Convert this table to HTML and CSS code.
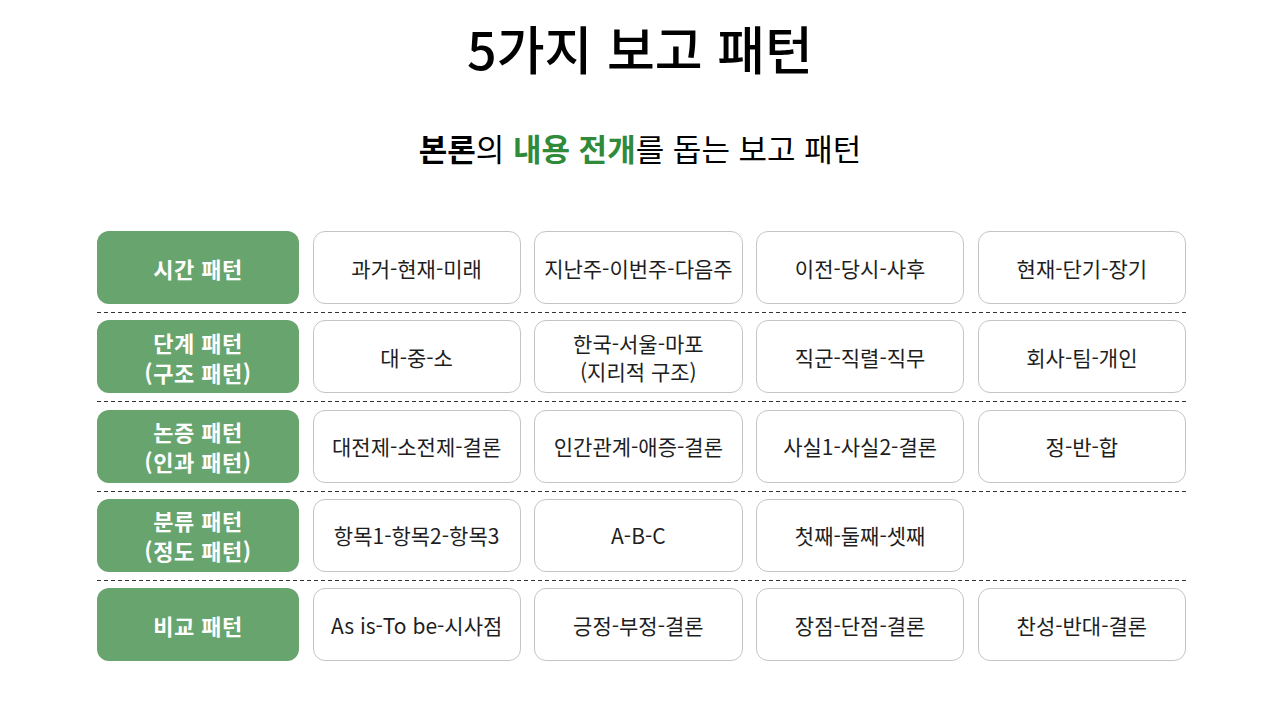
FILE: index.html
```html
<!DOCTYPE html>
<html lang="ko">
<head>
<meta charset="utf-8">
<title>5가지 보고 패턴</title>
<link rel="stylesheet" href="styles.css">
</head>
<body>
<div class="page">
  <h1 class="title">5가지 보고 패턴</h1>
  <p class="subtitle"><b>본론</b>의 <b class="accent">내용 전개</b>를 돕는 보고 패턴</p>
  <div class="table">
    <div class="row">
      <div class="label">시간 패턴</div>
      <div class="cell">과거-현재-미래</div>
      <div class="cell">지난주-이번주-다음주</div>
      <div class="cell">이전-당시-사후</div>
      <div class="cell">현재-단기-장기</div>
    </div>
    <div class="sep"></div>
    <div class="row">
      <div class="label">단계 패턴<br>(구조 패턴)</div>
      <div class="cell">대-중-소</div>
      <div class="cell">한국-서울-마포<br>(지리적 구조)</div>
      <div class="cell">직군-직렬-직무</div>
      <div class="cell">회사-팀-개인</div>
    </div>
    <div class="sep"></div>
    <div class="row">
      <div class="label">논증 패턴<br>(인과 패턴)</div>
      <div class="cell">대전제-소전제-결론</div>
      <div class="cell">인간관계-애증-결론</div>
      <div class="cell">사실1-사실2-결론</div>
      <div class="cell">정-반-합</div>
    </div>
    <div class="sep"></div>
    <div class="row">
      <div class="label">분류 패턴<br>(정도 패턴)</div>
      <div class="cell">항목1-항목2-항목3</div>
      <div class="cell">A-B-C</div>
      <div class="cell">첫째-둘째-셋째</div>
      <div class="cell empty"></div>
    </div>
    <div class="sep"></div>
    <div class="row">
      <div class="label">비교 패턴</div>
      <div class="cell">As is-To be-시사점</div>
      <div class="cell">긍정-부정-결론</div>
      <div class="cell">장점-단점-결론</div>
      <div class="cell">찬성-반대-결론</div>
    </div>
  </div>
</div>
</body>
</html>
```
FILE: styles.css
```css
* { box-sizing: border-box; }
html, body {
  margin: 0;
  padding: 0;
  background: #ffffff;
}
body {
  font-family: "Noto Sans CJK KR", "Noto Sans", sans-serif;
  color: #1a1a1a;
}
.page {
  width: 1280px;
  height: 720px;
  padding-top: 18px;
}
.title {
  margin: 0;
  height: 60px;
  line-height: 60px;
  font-size: 52px;
  font-weight: 500;
  text-align: center;
  color: #000;
}
.subtitle {
  margin: 50px 0 0;
  height: 40px;
  line-height: 40px;
  font-size: 31px;
  font-weight: 400;
  text-align: center;
  color: #000;
}
.subtitle b { font-weight: 700; }
.subtitle .accent { color: #2f8a3a; }
.table {
  width: 1089px;
  margin: 63px 0 0 97px;
}
.row {
  display: grid;
  grid-template-columns: 202px repeat(4, 1fr);
  column-gap: 13.5px;
  height: 73px;
}
.label {
  background: #68a46e;
  color: #fff;
  border-radius: 12px;
  font-size: 22px;
  font-weight: 700;
  letter-spacing: 0.5px;
  line-height: 30px;
  display: flex;
  align-items: center;
  justify-content: center;
  text-align: center;
}
.cell {
  border: 1px solid #c4c4c4;
  border-radius: 12px;
  font-size: 21px;
  line-height: 28px;
  color: #1e1e1e;
  display: flex;
  align-items: center;
  justify-content: center;
  text-align: center;
}
.cell.empty { border: none; }
.sep {
  height: 1px;
  margin: 8px 0 7.25px;
  background-image: linear-gradient(to right, #333 0 4px, transparent 4px 7px);
  background-size: 7px 1px;
  background-repeat: repeat-x;
}
```
